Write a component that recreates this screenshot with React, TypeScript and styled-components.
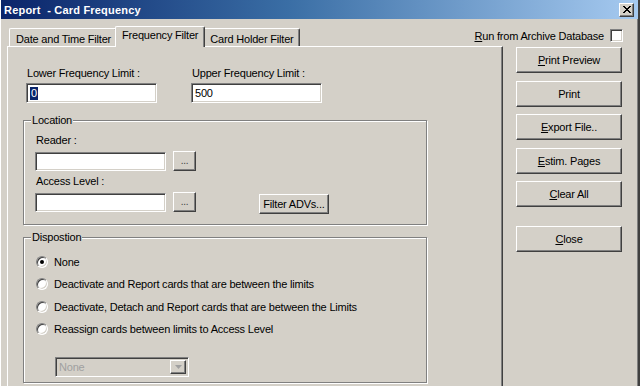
import React from "react";
import styled, { createGlobalStyle } from "styled-components";

const Global = createGlobalStyle`
  html, body { margin: 0; padding: 0; background: #d4d0c8; }
  body { font-family: "Liberation Sans", Arial, sans-serif; font-size: 11px; letter-spacing: -0.2px; color: #000; }
  * { box-sizing: border-box; }
`;

const Win = styled.div`
  width: 640px;
  height: 386px;
  overflow: hidden;
  display: flex;
  flex-direction: column;
  background: #d4d0c8;
  border-left: 1px solid #fff;
  border-right: 2px solid #404040;
  box-shadow: inset -1px 0 #808080;
`;

const TitleBar = styled.div`
  height: 19px;
  flex: none;
  display: flex;
  align-items: center;
  justify-content: space-between;
  padding: 0 4px 0 3px;
  background: linear-gradient(to right, #0a246a 0%, #3a6ea5 45%, #a6caf0 100%);
`;

const Title = styled.div`
  color: #fff;
  font-weight: bold;
  font-size: 11px;
  white-space: pre;
  letter-spacing: 0.2px;
`;

const CloseBtn = styled.div`
  width: 15px;
  height: 14px;
  display: flex;
  align-items: center;
  justify-content: center;
  background: #d4d0c8;
  border: 1px solid;
  border-color: #fff #404040 #404040 #fff;
  box-shadow: inset -1px -1px #808080;
`;

const Body = styled.div`
  flex: 1;
  display: flex;
  flex-direction: column;
  min-height: 0;
  padding: 7px 0 0 6px;
`;

const TopRow = styled.div`
  display: flex;
  align-items: flex-end;
  height: 20px;
  flex: none;
  position: relative;
  z-index: 1;
`;

const TabStrip = styled.div`
  display: flex;
  align-items: flex-end;
  padding-left: 2px;
  height: 20px;
`;

const Tab = styled.div<{ $active?: boolean }>`
  height: ${(p) => (p.$active ? "21px" : "18px")};
  margin: ${(p) => (p.$active ? "0 -2px -1px -2px" : "0")};
  padding: ${(p) => (p.$active ? "2px 6px 0 6px" : "2px 5px 0 6px")};
  display: flex;
  align-items: ${(p) => (p.$active ? "flex-start" : "center")};
  background: #d4d0c8;
  border-top: 1px solid #fff;
  border-left: 1px solid #fff;
  border-right: 1px solid #404040;
  box-shadow: inset -1px 0 #808080;
  border-radius: 2px 2px 0 0;
  white-space: nowrap;
  position: relative;
  z-index: ${(p) => (p.$active ? 2 : 0)};
`;

const ArchiveRow = styled.div`
  margin-left: auto;
  align-self: flex-start;
  margin-top: 3px;
  display: flex;
  align-items: center;
  gap: 6px;
  padding-right: 15px;
  height: 13px;
  white-space: nowrap;
`;

const CheckBox = styled.div`
  width: 13px;
  height: 13px;
  background: #fff;
  border: 1px solid;
  border-color: #808080 #fff #fff #808080;
  box-shadow: inset 1px 1px #404040, inset -1px -1px #d4d0c8;
`;

const MainRow = styled.div`
  flex: 1;
  display: flex;
  min-height: 0;
`;

const Panel = styled.div`
  width: 496px;
  flex: none;
  display: flex;
  flex-direction: column;
  border-top: 1px solid #fff;
  border-left: 1px solid #fff;
  border-right: 1px solid #404040;
  box-shadow: inset -1px 0 #808080;
  padding: 20px 0 0 15px;
`;

const FreqRow = styled.div`
  display: flex;
  gap: 34px;
  padding-left: 3px;
`;

const Field = styled.div<{ $w: number }>`
  width: ${(p) => p.$w}px;
  display: flex;
  flex-direction: column;
  gap: 3px;
`;

const Label = styled.div`
  height: 13px;
  line-height: 13px;
  padding-left: 1px;
  white-space: nowrap;
`;

const TextBox = styled.div<{ $w?: number; $h?: number }>`
  width: ${(p) => (p.$w ? `${p.$w}px` : "100%")};
  height: ${(p) => p.$h ?? 20}px;
  background: #fff;
  border: 1px solid;
  border-color: #808080 #fff #fff #808080;
  box-shadow: inset 1px 1px #404040, inset -1px -1px #d4d0c8;
  display: flex;
  align-items: center;
  padding-left: 3px;
  flex: none;
`;

const Sel = styled.span`
  background: #0a246a;
  color: #fff;
  padding: 0 1px;
  line-height: 13px;
`;

const Group = styled.div<{ $h: number; $mt: number }>`
  position: relative;
  width: 404px;
  height: ${(p) => p.$h}px;
  margin-top: ${(p) => p.$mt}px;
  border: 1px solid #808080;
  box-shadow: inset 1px 1px #fff, 1px 1px #fff;
  flex: none;
`;

const Legend = styled.div`
  position: absolute;
  top: -7px;
  left: 7px;
  padding: 0 1px;
  background: #d4d0c8;
  line-height: 13px;
`;

const GroupBody = styled.div<{ $pt: number; $pl: number }>`
  display: flex;
  flex-direction: column;
  padding: ${(p) => p.$pt}px 0 0 ${(p) => p.$pl}px;
`;

const InputRow = styled.div`
  display: flex;
  align-items: flex-start;
  gap: 7px;
  margin: 5px 0 4px 0;
`;

const Button = styled.div<{ $w: number; $h: number; $ml?: number; $mt?: number }>`
  width: ${(p) => p.$w}px;
  height: ${(p) => p.$h}px;
  margin-left: ${(p) => p.$ml ?? 0}px;
  margin-top: ${(p) => p.$mt ?? 0}px;
  flex: none;
  display: flex;
  align-items: center;
  justify-content: center;
  background: #d4d0c8;
  border: 1px solid;
  border-color: #fff #404040 #404040 #fff;
  box-shadow: inset -1px -1px #808080;
  white-space: nowrap;
`;

const Dots = styled.span`
  color: #404040;
  font-size: 10px;
  margin-top: -1px;
`;

const RadioList = styled.div`
  display: flex;
  flex-direction: column;
  gap: 9.5px;
`;

const RadioRow = styled.div`
  display: flex;
  align-items: center;
  gap: 6px;
  height: 13px;
  white-space: nowrap;
`;

const RadioDot = styled.div<{ $on?: boolean }>`
  width: 12px;
  height: 12px;
  border-radius: 50%;
  background: #fff;
  border: 1px solid;
  border-color: #808080 #fff #fff #808080;
  box-shadow: inset 1px 1px #404040, inset -1px -1px #d4d0c8;
  display: flex;
  align-items: center;
  justify-content: center;
  flex: none;
  &::after {
    content: "";
    width: 4px;
    height: 4px;
    border-radius: 50%;
    background: ${(p) => (p.$on ? "#000" : "transparent")};
  }
`;

const Combo = styled.div`
  width: 134px;
  height: 20px;
  margin: 21px 0 0 19px;
  border: 1px solid;
  border-color: #808080 #fff #fff #808080;
  box-shadow: inset 1px 1px #404040, inset -1px -1px #d4d0c8;
  background: #d4d0c8;
  display: flex;
  align-items: stretch;
  padding: 2px;
`;

const ComboText = styled.div`
  flex: 1;
  color: #a0a0a0;
  display: flex;
  align-items: center;
  padding-left: 1px;
`;

const ComboBtn = styled.div`
  width: 16px;
  display: flex;
  align-items: center;
  justify-content: center;
  border: 1px solid;
  border-color: #fff #404040 #404040 #fff;
  box-shadow: inset -1px -1px #808080;
`;

const ButtonCol = styled.div`
  display: flex;
  flex-direction: column;
  gap: 7.5px;
  margin: 1px 0 0 13px;
`;

const U = styled.span`
  text-decoration: underline;
`;

export default function App() {
  return (
    <>
      <Global />
      <Win>
        <TitleBar>
          <Title>Report  - Card Frequency</Title>
          <CloseBtn>
            <svg width="8" height="7" viewBox="0 0 8 7">
              <path d="M0 0 L7 7 M1 0 L8 7 M7 0 L0 7 M8 0 L1 7" stroke="#000" strokeWidth="1" />
            </svg>
          </CloseBtn>
        </TitleBar>
        <Body>
          <TopRow>
            <TabStrip>
              <Tab>Date and Time Filter</Tab>
              <Tab $active>Frequency Filter</Tab>
              <Tab>Card Holder Filter</Tab>
            </TabStrip>
            <ArchiveRow>
              <span>
                <U>R</U>un from Archive Database
              </span>
              <CheckBox />
            </ArchiveRow>
          </TopRow>
          <MainRow>
            <Panel>
              <FreqRow>
                <Field $w={131}>
                  <Label>Lower Frequency Limit :</Label>
                  <TextBox>
                    <Sel>0</Sel>
                  </TextBox>
                </Field>
                <Field $w={131}>
                  <Label>Upper Frequency Limit :</Label>
                  <TextBox>500</TextBox>
                </Field>
              </FreqRow>

              <Group $h={105} $mt={17}>
                <Legend>Location</Legend>
                <GroupBody $pt={13} $pl={11}>
                  <Label>Reader :</Label>
                  <InputRow>
                    <TextBox $w={131} $h={19} />
                    <Button $w={23} $h={20} $mt={-1}>
                      <Dots>...</Dots>
                    </Button>
                  </InputRow>
                  <Label>Access Level :</Label>
                  <InputRow>
                    <TextBox $w={131} $h={19} />
                    <Button $w={23} $h={20} $mt={-1}>
                      <Dots>...</Dots>
                    </Button>
                    <Button $w={70} $h={20} $ml={56} $mt={1}>
                      Filter ADVs...
                    </Button>
                  </InputRow>
                </GroupBody>
              </Group>

              <Group $h={146} $mt={12}>
                <Legend>Dispostion</Legend>
                <GroupBody $pt={17} $pl={12}>
                  <RadioList>
                    <RadioRow>
                      <RadioDot $on />
                      None
                    </RadioRow>
                    <RadioRow>
                      <RadioDot />
                      Deactivate and Report cards that are between the limits
                    </RadioRow>
                    <RadioRow>
                      <RadioDot />
                      Deactivate, Detach and Report cards that are between the Limits
                    </RadioRow>
                    <RadioRow>
                      <RadioDot />
                      Reassign cards between limits to Access Level
                    </RadioRow>
                  </RadioList>
                  <Combo>
                    <ComboText>None</ComboText>
                    <ComboBtn>
                      <svg width="7" height="4" viewBox="0 0 7 4">
                        <path d="M0 0 H7 L3.5 4 Z" fill="#a0a0a0" />
                      </svg>
                    </ComboBtn>
                  </Combo>
                </GroupBody>
              </Group>
            </Panel>
            <ButtonCol>
              <Button $w={106} $h={26}>
                <span>
                  <U>P</U>rint Preview
                </span>
              </Button>
              <Button $w={106} $h={26}>
                Print
              </Button>
              <Button $w={106} $h={26}>
                <span>
                  <U>E</U>xport File..
                </span>
              </Button>
              <Button $w={106} $h={26}>
                <span>
                  <U>E</U>stim. Pages
                </span>
              </Button>
              <Button $w={106} $h={26}>
                <span>
                  <U>C</U>lear All
                </span>
              </Button>
              <Button $w={106} $h={26} $mt={11}>
                <span>
                  <U>C</U>lose
                </span>
              </Button>
            </ButtonCol>
          </MainRow>
        </Body>
      </Win>
    </>
  );
}
